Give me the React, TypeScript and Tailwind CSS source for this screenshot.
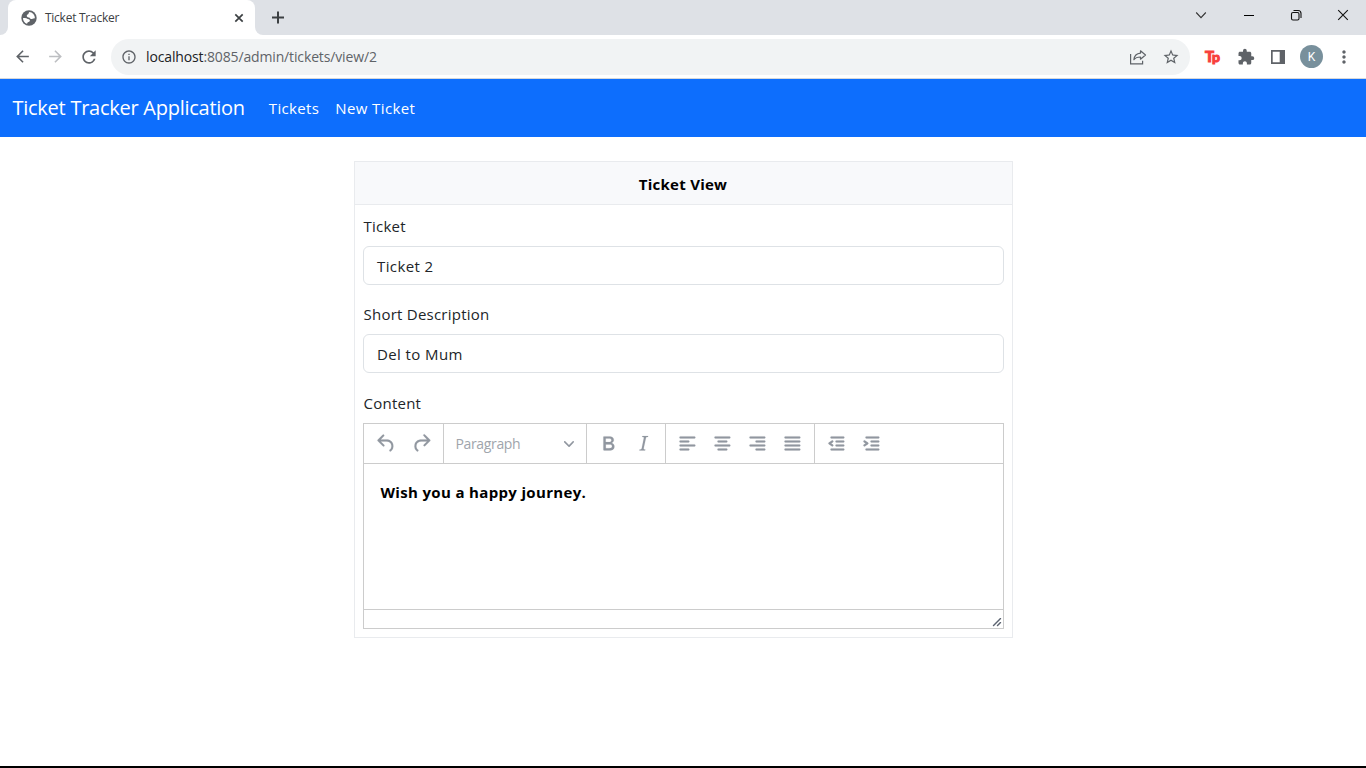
import React from "react";
import {
  MdArrowBack,
  MdArrowForward,
  MdRefresh,
  MdInfoOutline,
  MdStarBorder,
  MdExtension,
  MdMoreVert,
} from "react-icons/md";

const ICONS = {
  undo: "M6.4 8H12c3.7 0 6.2 2 6.8 5.1.6 2.7-.4 5.6-2.3 6.8a1 1 0 01-1-1.8c1.1-.6 1.8-2.7 1.4-4.6-.5-2.1-2.1-3.5-4.9-3.5H6.4l3.3 3.3a1 1 0 11-1.4 1.4l-5-5a1 1 0 010-1.4l5-5a1 1 0 011.4 1.4L6.4 8z",
  redo: "M17.6 10H12c-2.8 0-4.4 1.4-4.9 3.5-.4 2 .3 4 1.4 4.6a1 1 0 11-1 1.8c-2-1.2-2.9-4.1-2.3-6.8.6-3 3-5.1 6.8-5.1h5.6l-3.3-3.3a1 1 0 111.4-1.4l5 5a1 1 0 010 1.4l-5 5a1 1 0 01-1.4-1.4l3.3-3.3z",
  bold: "M7.8 19c-.3 0-.5 0-.6-.2l-.2-.5V5.7c0-.2 0-.4.2-.5l.6-.2h5c1.5 0 2.7.3 3.5 1 .7.6 1.1 1.4 1.1 2.5a3 3 0 01-.6 1.9c-.4.6-1 1-1.6 1.2.4.1.9.3 1.3.6s.8.7 1 1.2c.4.4.5 1 .5 1.6 0 1.3-.4 2.3-1.3 3-.8.7-2.1 1-3.8 1H7.8zm5-8.3c.6 0 1.2-.1 1.6-.5.4-.3.6-.7.6-1.3 0-1.1-.8-1.7-2.3-1.7H9.3v3.5h3.4zm.5 6c.7 0 1.3-.1 1.7-.4.4-.4.6-.9.6-1.5s-.2-1-.7-1.4c-.4-.3-1-.4-2-.4H9.4v3.8h4z",
  italic:
    "M16.7 4.7l-.1.9h-.3c-.6 0-1 0-1.4.3-.3.3-.4.6-.5 1.1l-2.1 9.8v.6c0 .5.4.8 1.4.8h.2l-.2.8H8l.2-.8h.2c1.1 0 1.8-.5 2-1.5l2-9.8.1-.5c0-.6-.4-.8-1.4-.8h-.3l.2-.9h5.8z",
  left: "M5 5h14a1 1 0 010 2H5a1 1 0 110-2zm0 4h8a1 1 0 010 2H5a1 1 0 110-2zm0 8h8a1 1 0 010 2H5a1 1 0 010-2zm0-4h14a1 1 0 010 2H5a1 1 0 010-2z",
  center:
    "M5 5h14a1 1 0 010 2H5a1 1 0 110-2zm3 4h8a1 1 0 010 2H8a1 1 0 110-2zm0 8h8a1 1 0 010 2H8a1 1 0 010-2zm-3-4h14a1 1 0 010 2H5a1 1 0 010-2z",
  right:
    "M5 5h14a1 1 0 010 2H5a1 1 0 110-2zm6 4h8a1 1 0 010 2h-8a1 1 0 110-2zm0 8h8a1 1 0 010 2h-8a1 1 0 010-2zm-6-4h14a1 1 0 010 2H5a1 1 0 010-2z",
  justify:
    "M5 5h14a1 1 0 010 2H5a1 1 0 110-2zm0 4h14a1 1 0 010 2H5a1 1 0 110-2zm0 4h14a1 1 0 010 2H5a1 1 0 010-2zm0 4h14a1 1 0 010 2H5a1 1 0 010-2z",
  outdent:
    "M7 5h12a1 1 0 010 2H7a1 1 0 110-2zm5 4h7a1 1 0 010 2h-7a1 1 0 010-2zm0 4h7a1 1 0 010 2h-7a1 1 0 010-2zm-5 4h12a1 1 0 010 2H7a1 1 0 010-2zm1.6-3.8a1 1 0 01-1.2 1.6l-3-2a1 1 0 010-1.6l3-2a1 1 0 011.2 1.6L6.8 12l1.8 1.2z",
  indent:
    "M7 5h12a1 1 0 010 2H7a1 1 0 110-2zm5 4h7a1 1 0 010 2h-7a1 1 0 010-2zm0 4h7a1 1 0 010 2h-7a1 1 0 010-2zm-5 4h12a1 1 0 010 2H7a1 1 0 010-2zm-2.6-3.8L6.2 12l-1.8-1.2a1 1 0 011.2-1.6l3 2a1 1 0 010 1.6l-3 2a1 1 0 11-1.2-1.6z",
};

type IconName = keyof typeof ICONS;

function ToolGroup({ icons, className }: { icons: IconName[]; className: string }) {
  return (
    <div className={`flex h-full items-center gap-px pb-px ${className}`}>
      {icons.map((name) => (
        <button key={name} className="flex h-[34px] w-[34px] items-center justify-center">
          <svg width="24" height="24" viewBox="-.4 -.4 24 24" fill="#9197a0" stroke="#9197a0" strokeWidth=".15" fillRule="evenodd">
            <path d={ICONS[name]} />
          </svg>
        </button>
      ))}
    </div>
  );
}

function BrowserChrome() {
  return (
    <header className="shrink-0">
      <div className="flex h-[35px] items-start bg-[#dee1e6]">
        <div className="flex h-[35px] w-2 items-end bg-white">
          <div className="h-full w-2 rounded-br-lg bg-[#dee1e6]" />
        </div>
        <div className="h-[35px] w-[247px] bg-[#dee1e6]">
          <div className="flex h-full items-center rounded-t-lg bg-white pl-[13px] pr-[10px]">
            <svg width="16" height="16" viewBox="0 0 16 16">
              <circle cx="8" cy="8" r="7.7" fill="#5f6368" />
              <path
                d="M8.300 2.100c-.9.900-.4 1.700-1.200 2.200-.9.500-1.500.9-1.300 1.900.2 1.100 1.600 1 2.400 1.300.9.400.9 1.500 1.900 1.600 1.300.1 1.600-.9 3.800-.8A6 6 0 008.300 2.100zM2 7.900c-.1 2.700 1.500 5 3.900 5.900.6-.4.400-1.200 1-1.600.8-.5 1.900-.5 2-1.500.1-1.100-1-1.300-1.900-1.700C5.900 8.500 5.800 7.900 2 7.900z"
                fill="#fff"
              />
            </svg>
            <span className="ml-[8px] text-[12px] leading-4 tracking-[-0.26px] text-[#3c4043]">Ticket Tracker</span>
            <svg className="ml-auto" width="12" height="12" viewBox="0 0 12 12" fill="none" stroke="#3c4043" strokeWidth="1.7">
              <path d="M2.300 2.300l7.400 7.400M9.700 2.300l-7.400 7.400" />
            </svg>
          </div>
        </div>
        <div className="h-[35px] w-2 bg-white">
          <div className="h-full w-2 rounded-bl-lg bg-[#dee1e6]" />
        </div>
        <svg className="ml-[9px] mt-[11px]" width="13" height="13" viewBox="0 0 13 13" fill="none" stroke="#3c4043" strokeWidth="2">
          <path d="M6 .5v12M0 6.500h12" />
        </svg>
        <div className="ml-auto mr-[17px] mt-[9px] flex items-center text-[#111]">
          <svg width="12" height="12" viewBox="0 0 12 12" fill="none" stroke="#333" strokeWidth="1.1">
            <path d="M1.2 3.5L6 8.600l4.800-5.100" />
          </svg>
          <svg className="ml-[36px]" width="12" height="12" viewBox="0 0 12 12" fill="none" stroke="#000" strokeWidth="1">
            <path d="M1 6.500h10" />
          </svg>
          <svg className="ml-[35px]" width="12" height="12" viewBox="0 0 12 12" fill="none" stroke="#111" strokeWidth="1.1">
            <rect x="1.5" y="3.5" width="7.5" height="7.5" rx="1.5" />
            <path d="M3.500 1.500h4.500a3 3 0 013 3V9" />
          </svg>
          <svg className="ml-[35px]" width="12" height="12" viewBox="0 0 12 12" fill="none" stroke="#111" strokeWidth="1.1">
            <path d="M1.200 1.200l9.600 9.600M10.800 1.200l-9.600 9.600" />
          </svg>
        </div>
      </div>
      <div className="flex h-[44px] items-center border-b border-[#d5d7da] bg-white pl-[13px] pr-[15px] text-[#5f6368]">
        <MdArrowBack className="h-[19px] w-[19px]" />
        <MdArrowForward className="ml-[14px] h-[19px] w-[19px] text-[#bdbfc2]" />
        <MdRefresh className="ml-[14px] h-[20px] w-[20px]" />
        <div className="ml-[12px] flex h-9 w-[1079px] items-center rounded-full bg-[#f1f3f4] pl-[10px] pr-[10px]">
          <MdInfoOutline className="h-4 w-4" />
          <span className="ml-[9px] text-[14px] leading-5 tracking-[-0.14px] text-[#5f6368]">
            <span className="text-[#202124]">localhost</span>:8085/admin/tickets/view/2
          </span>
          <svg className="ml-auto" width="18" height="18" viewBox="0 0 18 18" fill="none" stroke="#5f6368" strokeWidth="1.2">
            <path d="M1.600 6v9.800h12V12.800" />
            <path d="M11.500 2.800l5 4.200-5 4.200V9c-3.200 0-5.300.9-6.600 2.700.4-3.900 2.800-6.300 6.600-6.600z" strokeLinejoin="round" />
          </svg>
          <MdStarBorder className="ml-[15px] h-[18px] w-[18px]" />
        </div>
        <div className="ml-[15px] flex w-[17px] items-start font-black leading-none text-[#f8403c]">
          <span className="font-['Lato'] text-[15px] [-webkit-text-stroke:1px_#f8403c]">T</span>
          <span className="-ml-[2px] mt-[1px] font-['Lato'] text-[14px] [-webkit-text-stroke:1px_#f8403c]">p</span>
        </div>
        <MdExtension className="ml-[15px] h-[18px] w-[18px]" />
        <svg className="ml-[15px]" width="16" height="16" viewBox="0 0 16 16" fill="#5f6368" fillRule="evenodd">
          <path d="M1 1h14v14H1zM2.700 2.700v10.600h7V2.700z" />
        </svg>
        <div className="ml-[14px] flex h-[23px] w-[23px] items-center justify-center rounded-full bg-[#78909c] font-['Roboto'] text-[12px] text-white">
          K
        </div>
        <MdMoreVert className="-mr-[3px] ml-auto h-[20px] w-[20px]" />
      </div>
    </header>
  );
}

function Field({ label, value }: { label: string; value: string }) {
  return (
    <div>
      <label className="block h-6 pl-px text-[15px] leading-6 tracking-[0.24px]">{label}</label>
      <div className="mt-2 flex h-[39px] items-center rounded-md border border-[#dee2e6] px-[13.5px] pt-px text-[15px] tracking-[0.4px]">
        {value}
      </div>
    </div>
  );
}

function Editor() {
  return (
    <div className="flex h-[206px] flex-col border border-[#ccc]">
      <div className="flex h-10 shrink-0 items-center border-b border-[#ccc]">
        <ToolGroup icons={["undo", "redo"]} className="w-[80px] border-r border-[#ccc] pl-[5px]" />
        <div className="flex h-full w-[143px] items-center justify-between border-r border-[#ccc] pl-3 pr-[12px] text-[14px] tracking-[-0.35px] text-[#a0a5ac]">
          <span>Paragraph</span>
          <svg width="10" height="10" viewBox="0 0 10 10" fill="#9197a0">
            <path d="M8.7 2.2c.3-.3.8-.3 1 0 .4.4.4.9 0 1.2L5.7 7.8c-.3.3-.9.3-1.2 0L.2 3.4a.8.8 0 010-1.2c.3-.3.8-.3 1.1 0L5 6l3.7-3.8z" />
          </svg>
        </div>
        <ToolGroup icons={["bold", "italic"]} className="w-[79px] border-r border-[#ccc] pl-[4px]" />
        <ToolGroup icons={["left", "center", "right", "justify"]} className="w-[149px] border-r border-[#ccc] pl-[4px]" />
        <ToolGroup icons={["outdent", "indent"]} className="pl-[4px]" />
      </div>
      <div className="flex-1 pl-[17px] pt-4">
        <p className="text-[15px] font-bold leading-6 tracking-[0.34px] text-black">Wish you a happy journey.</p>
      </div>
      <div className="flex h-[19px] shrink-0 items-end justify-end border-t border-[#ccc] pb-px pr-px">
        <svg width="10" height="10" viewBox="0 0 10 10" fill="#5b6370">
          <path d="M8.1 1.1A.5.5 0 119 2l-7 7A.5.5 0 111 8l7-7zM8.1 5.1A.5.5 0 119 6l-3 3A.5.5 0 115 8l3-3z" />
        </svg>
      </div>
    </div>
  );
}

export default function App() {
  return (
    <div className="flex h-[768px] w-[1366px] flex-col overflow-hidden border-b-2 border-black bg-white font-['Open_Sans',sans-serif] text-[#212529]">
      <BrowserChrome />
      <nav className="flex h-[58px] shrink-0 items-center bg-[#0d6efd] pl-[12.5px] text-white">
        <span className="text-[20px] leading-[30px] tracking-[-0.26px]">Ticket Tracker Application</span>
        <span className="ml-6 pt-px text-[15px] tracking-[0.34px]">Tickets</span>
        <span className="ml-4 pt-px text-[15px] tracking-[0.4px]">New Ticket</span>
      </nav>
      <main className="mx-auto mt-6 h-[477px] w-[659px] shrink-0 border border-[#e9ebee]">
        <h1 className="flex h-[43px] items-center justify-center border-b border-[#e9ebee] bg-[#f8f9fb] pt-0.5 text-[15px] font-bold tracking-[0.26px] text-black">
          Ticket View
        </h1>
        <div className="px-2 pt-[9px]">
          <Field label="Ticket" value="Ticket 2" />
          <div className="mt-[17px]">
            <Field label="Short Description" value="Del to Mum" />
          </div>
          <div className="mb-2 mt-[18px] h-6 pl-px text-[15px] leading-6 tracking-[0.24px]">Content</div>
          <Editor />
        </div>
      </main>
    </div>
  );
}
